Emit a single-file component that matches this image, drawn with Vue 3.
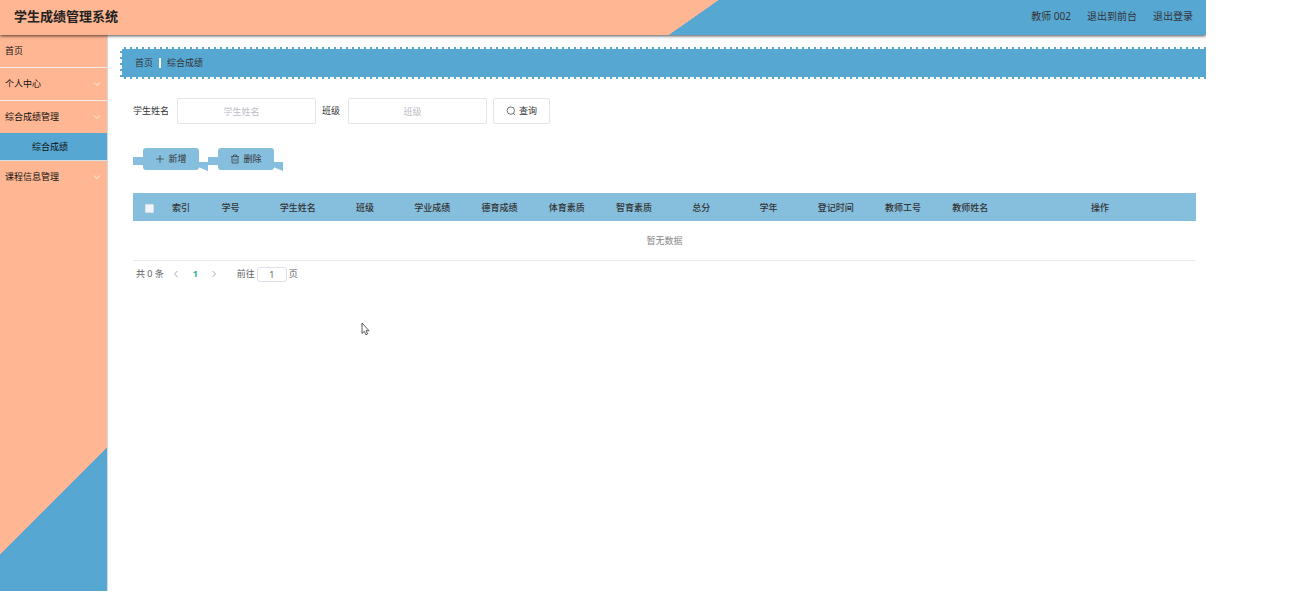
<script setup>
import { ref } from 'vue'

const studentName = ref('')
const className = ref('')
const page = ref('1')
const allChecked = ref(false)
const columns = ['学号', '学生姓名', '班级', '学业成绩', '德育成绩', '体育素质', '智育素质', '总分', '学年', '登记时间', '教师工号', '教师姓名']
</script>

<template>
  <div class="layout">
    <header class="topbar">
      <h1>学生成绩管理系统</h1>
      <nav class="user-links">
        <span>教师 002</span>
        <a href="#front">退出到前台</a>
        <a href="#logout">退出登录</a>
      </nav>
    </header>

    <div class="body">
      <aside class="sidebar">
        <a class="item" href="#home">首页</a>
        <a class="item" href="#center">个人中心
          <svg class="chevron" viewBox="0 0 8 8"><path d="M1 2.5l3 3 3-3" /></svg>
        </a>
        <a class="item" href="#scores">综合成绩管理
          <svg class="chevron" viewBox="0 0 8 8"><path d="M1 2.5l3 3 3-3" /></svg>
        </a>
        <a class="sub" href="#score-list">综合成绩</a>
        <a class="item last" href="#courses">课程信息管理
          <svg class="chevron" viewBox="0 0 8 8"><path d="M1 2.5l3 3 3-3" /></svg>
        </a>
      </aside>

      <main class="main">
        <div class="crumbs">
          <a href="#home">首页</a>
          <i class="bar"></i>
          <span>综合成绩</span>
        </div>

        <section class="content">
          <form class="search" @submit.prevent>
            <label for="student">学生姓名</label>
            <input id="student" v-model="studentName" type="text" placeholder="学生姓名">
            <label for="class">班级</label>
            <input id="class" v-model="className" type="text" placeholder="班级">
            <button type="submit">
              <svg viewBox="0 0 10 10"><circle cx="4.8" cy="4.6" r="3.7" /><path d="M7.4 7.3l1.8 1.8" /></svg>
              查询
            </button>
          </form>

          <div class="actions">
            <button class="ribbon" type="button">
              <svg viewBox="0 0 10 10"><path d="M5 1v8M1 5h8" /></svg>
              新增
            </button>
            <button class="ribbon" type="button">
              <svg viewBox="0 0 10 10"><path d="M1 2.5h8M3.5 2.5v-1.5h3v1.5M2 2.5v6.5h6v-6.5M4 4.5v2.8M6 4.5v2.8" /></svg>
              删除
            </button>
          </div>

          <table>
            <colgroup>
              <col class="narrow">
              <col class="narrow">
              <col v-for="c in columns" :key="c">
              <col class="wide">
            </colgroup>
            <thead>
              <tr>
                <th><input v-model="allChecked" type="checkbox" aria-label="全选"></th>
                <th>索引</th>
                <th v-for="c in columns" :key="c">{{ c }}</th>
                <th>操作</th>
              </tr>
            </thead>
            <tbody>
              <tr><td colspan="15">暂无数据</td></tr>
            </tbody>
          </table>

          <div class="pager">
            <span>共 0 条</span>
            <button type="button" aria-label="上一页"><svg viewBox="0 0 8 8"><path d="M5.5 1l-3 3 3 3" /></svg></button>
            <button class="current" type="button">1</button>
            <button type="button" aria-label="下一页"><svg viewBox="0 0 8 8"><path d="M2.5 1l3 3-3 3" /></svg></button>
            <label class="jump">前往<input v-model="page" type="text">页</label>
          </div>
        </section>
      </main>
    </div>

    <svg class="cursor" viewBox="0 0 9 14"><path d="M1 1v10.5l2.3-2.2 1.6 3.5 1.7-.8-1.6-3.3h3z" /></svg>
  </div>
</template>

<style>
body {
  background: #fff;
}
</style>

<style scoped>
* {
  box-sizing: border-box;
}

.layout {
  display: flex;
  flex-direction: column;
  min-height: calc(100vh - 2px);
  margin-right: 85px;
  color: #333;
  font-family: "Noto Sans", "Noto Sans CJK SC", sans-serif;
  font-size: 9px;
  line-height: 12px;
}

a {
  color: inherit;
  text-decoration: none;
}

button,
input {
  margin: 0;
  padding: 0;
  color: inherit;
  font: inherit;
}

svg {
  fill: none;
  stroke: currentColor;
}

.topbar {
  position: relative;
  display: flex;
  align-items: center;
  justify-content: space-between;
  height: 35px;
  padding: 0 13px 3px 14px;
  background: linear-gradient(145deg, #ffb793 57.2%, #57a7d3 57.25%);
  box-shadow: 0 1px 3px rgba(0, 0, 0, 0.7);
  clip-path: inset(0 0 -6px 0);
}

h1 {
  margin: 0;
  color: #222;
  font-size: 13px;
  font-weight: 700;
  line-height: 18px;
}

.user-links {
  display: flex;
  gap: 16px;
  font-size: 10px;
}

.body {
  display: flex;
  flex: 1;
}

.sidebar {
  flex: none;
  width: 108px;
  background: linear-gradient(135deg, #ffb793 78.3%, #57a7d3 78.4%);
  border-right: 1px solid #d6d9db;
  color: #111;
}

.item {
  display: flex;
  align-items: center;
  justify-content: space-between;
  height: 33px;
  padding: 0 6px 0 5px;
  border-bottom: 1px solid #f5e9e3;
}

.last {
  height: 32px;
  border-bottom: 0;
}

.chevron {
  width: 8px;
  height: 8px;
  color: #fdf0e9;
}

.sub {
  display: flex;
  align-items: center;
  height: 28px;
  margin-top: -1px;
  padding-left: 32px;
  background: #57a7d3;
  border-bottom: 1px solid #d8e0e4;
}

.main {
  flex: 1;
  min-width: 0;
  padding: 12px 0 0 12px;
}

/* Stamp-like edge: small teeth along the top, bottom and left sides */
.crumbs {
  --fill: #57a7d3;
  display: flex;
  align-items: center;
  height: 32px;
  padding-left: 13px;
  border: 2px solid transparent;
  border-right: 0;
  background:
    linear-gradient(var(--fill), var(--fill)) padding-box,
    repeating-linear-gradient(90deg, var(--fill) 0 2px, transparent 2px 6px) 4px 0 / 100% 2px no-repeat border-box,
    repeating-linear-gradient(90deg, var(--fill) 0 2px, transparent 2px 6px) 4px 100% / 100% 2px no-repeat border-box,
    repeating-linear-gradient(transparent 0 4px, var(--fill) 4px 6px) 0 0 / 2px 100% no-repeat border-box;
}

.bar {
  width: 2px;
  height: 10px;
  margin: 0 6px;
  background: #fff;
}

.content {
  padding: 19px 10px 0 13px;
}

.search {
  display: flex;
  align-items: center;
}

.search input {
  width: 139px;
  height: 26px;
  margin: 0 6px 0 8px;
  padding-right: 10px;
  border: 1px solid #e2e4e9;
  border-radius: 2px;
  outline: 0;
  text-align: center;
}

.search input::placeholder {
  color: #b9bdc5;
}

.search button {
  display: flex;
  align-items: center;
  justify-content: center;
  gap: 3px;
  width: 57px;
  height: 26px;
  background: #fff;
  border: 1px solid #e2e4e9;
  border-radius: 2px;
}

.search svg,
.actions svg {
  width: 10px;
  height: 10px;
  stroke-width: 0.7;
}

.actions {
  display: flex;
  gap: 19px;
  margin: 24px 0 23px 10px;
}

.ribbon {
  position: relative;
  display: flex;
  align-items: center;
  justify-content: center;
  gap: 3px;
  width: 56px;
  height: 22px;
  background: #86bfde;
  border: 0;
  border-radius: 3px;
}

.ribbon::before,
.ribbon::after {
  position: absolute;
  width: 10px;
  background: #86bfde;
  content: "";
}

.ribbon::before {
  top: 9px;
  right: 100%;
  height: 8px;
}

.ribbon::after {
  top: 14px;
  left: calc(100% - 1px);
  height: 9px;
  clip-path: polygon(0 0, 100% 0, 100% 100%, 0 55%);
}

table {
  width: 100%;
  border-collapse: collapse;
  table-layout: fixed;
}

.narrow {
  width: 32px;
}

.wide {
  width: 192px;
}

th {
  height: 28px;
  padding: 2px 0 0;
  background: #86bfde;
  font-weight: 500;
}

th input {
  display: block;
  width: 9px;
  height: 9px;
  margin: 0 auto;
  appearance: none;
  background: #f0f3fb;
  border: 1px solid #dcdfe6;
  border-radius: 1px;
}

td {
  height: 39px;
  padding: 2px 0 0;
  border-bottom: 1px solid #e8eaee;
  color: #888;
  text-align: center;
}

.pager {
  display: flex;
  align-items: center;
  height: 15px;
  margin-top: 6px;
  padding-left: 3px;
  color: #606266;
}

.pager button {
  display: flex;
  align-items: center;
  justify-content: center;
  width: 19px;
  height: 14px;
  background: none;
  border: 0;
  color: #a8abb2;
}

.pager svg {
  width: 8px;
  height: 8px;
}

.pager span {
  margin-right: 3px;
}

.pager .current {
  color: #2aae9c;
  font-weight: 700;
}

.jump {
  display: flex;
  align-items: center;
  margin-left: 13px;
}

.jump input {
  width: 30px;
  height: 15px;
  margin: 0 2px;
  border: 1px solid #dcdfe6;
  border-radius: 3px;
  text-align: center;
}

.cursor {
  position: absolute;
  top: 322px;
  left: 361px;
  width: 9px;
  height: 14px;
  fill: #fff;
  stroke: #333;
  stroke-width: 0.8;
}
</style>
